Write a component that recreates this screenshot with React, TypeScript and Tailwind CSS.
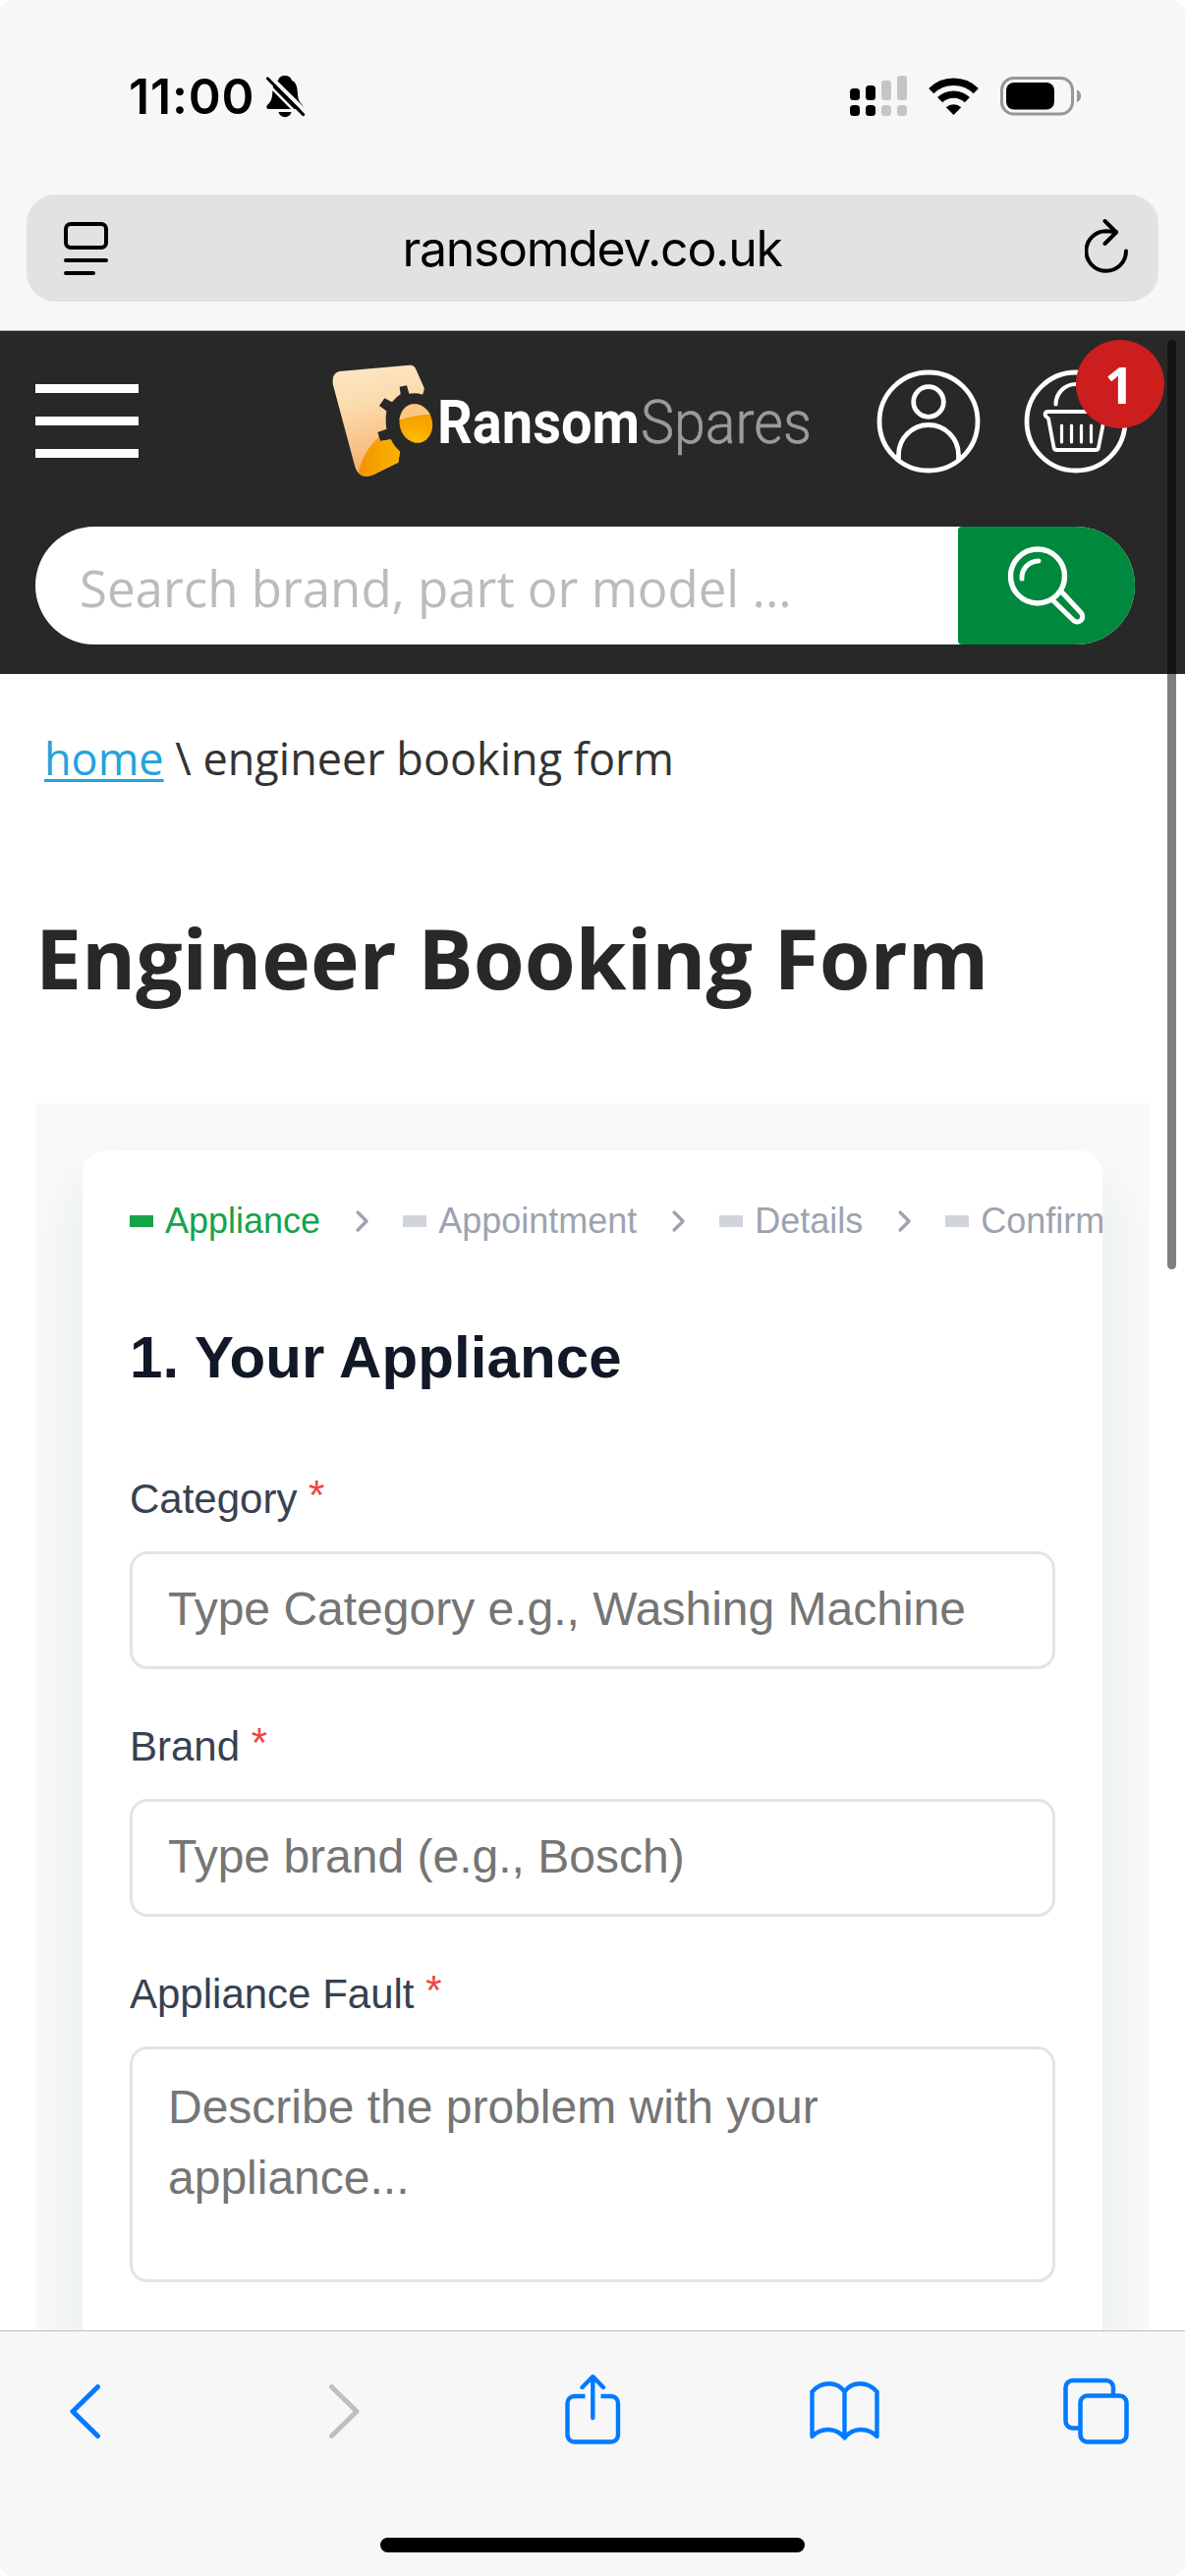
import React from "react";

const steps = [
  { label: "Appliance", active: true },
  { label: "Appointment", active: false },
  { label: "Details", active: false },
  { label: "Confirm", active: false },
];

function BellOff() {
  return (
    <svg width="40" height="44" viewBox="0 0 40 44" className="block">
      <path
        d="M19 1c-3.500 0-6.300 2-6.900 4.800C8 7.500 6.500 12 6.300 18c-.2 5-1 8.500-3.600 11.300C.8 31.300 0 32 .4 33.600.8 34.800 1.800 35 3 35h32c1.400 0 2.300-.5 2.500-1.700.3-1.400-.4-2.200-2.200-4.100C32.700 26.500 32 23 31.800 18c-.2-6-1.800-10.500-5.900-12.200C25.300 3 22.500 1 19 1Z"
        fill="#000"
      />
      <path d="M12.500 38h13c-.8 3.200-3.300 5.200-6.500 5.200s-5.700-2-6.500-5.200Z" fill="#000" />
      <path d="M3.500 1.500 41 38.500" stroke="#f7f7f7" strokeWidth="4" />
      <path d="M-1 7 35.500 44" stroke="#f7f7f7" strokeWidth="2.500" />
      <path d="M1.500 4 37.500 40.500" stroke="#000" strokeWidth="3.200" strokeLinecap="round" />
    </svg>
  );
}

function Signal() {
  return (
    <svg width="58" height="42" viewBox="0 0 58 42" className="block">
      <g fill="#000">
        <rect x="0" y="13" width="10" height="12" rx="3.500" />
        <rect x="16" y="10" width="10" height="15" rx="3.500" />
        <rect x="0" y="30" width="10" height="11" rx="3.500" />
        <rect x="16" y="30" width="10" height="11" rx="3.500" />
      </g>
      <g fill="#c5c5c5">
        <rect x="32" y="5" width="10" height="20" rx="3" />
        <rect x="48" y="0" width="10" height="25" rx="3" />
        <rect x="32" y="30" width="10" height="11" rx="3.500" />
        <rect x="48" y="30" width="10" height="11" rx="3.500" />
      </g>
    </svg>
  );
}

function Wifi() {
  return (
    <svg width="51" height="38" viewBox="0 0 51 38" className="block">
      <g fill="none" stroke="#000" strokeWidth="7.400">
        <path d="M2.700 13.600A32.500 32.500 0 0 1 48.300 13.600" />
        <path d="M11.600 22.700A20 20 0 0 1 39.400 22.700" />
      </g>
      <path d="M17.800 30.200a11.500 11.500 0 0 1 15.400 0L25.500 38Z" fill="#000" />
    </svg>
  );
}

function Battery() {
  return (
    <svg width="83" height="40" viewBox="0 0 83 40" className="block">
      <rect x="1.500" y="1.500" width="72" height="36.500" rx="12" fill="none" stroke="#989898" strokeWidth="3" />
      <rect x="6" y="6" width="49" height="27.500" rx="8" fill="#000" />
      <path d="M78 13.500c2.800 1 4.200 3.300 4.200 6.200s-1.400 5.200-4.200 6.200Z" fill="#989898" />
    </svg>
  );
}

function PageMenu() {
  return (
    <svg width="46" height="54" viewBox="0 0 46 54" fill="none" stroke="#000" strokeWidth="4" strokeLinecap="round" className="block">
      <rect x="2" y="2" width="41" height="24" rx="5" />
      <path d="M2 39h41M2 52h28" />
    </svg>
  );
}

function Reload() {
  return (
    <svg width="46" height="56" viewBox="0 0 46 56" fill="none" stroke="#000" strokeWidth="4" strokeLinecap="round" strokeLinejoin="round" className="block">
      <path d="M42 32.500A20.300 20.300 0 1 1 21.800 12.200L32 13" />
      <path d="M20.500 2 32 13.500 20.500 25" />
    </svg>
  );
}

function LogoMark() {
  return (
    <svg width="130" height="136" viewBox="0 0 390 408" className="block">
      <defs>
        <linearGradient id="pale" x1="0.3" y1="0" x2="0.5" y2="1">
          <stop offset="0" stopColor="#fde9cc" />
          <stop offset="0.350" stopColor="#fbdcae" />
          <stop offset="1" stopColor="#f6a55c" />
        </linearGradient>
        <linearGradient id="amber" x1="0" y1="0.5" x2="1" y2="0.5">
          <stop offset="0" stopColor="#f39200" />
          <stop offset="1" stopColor="#fdb900" />
        </linearGradient>
        <radialGradient id="hub" cx="0.5" cy="0.9" r="0.7">
          <stop offset="0" stopColor="#ffc000" />
          <stop offset="1" stopColor="#f49400" />
        </radialGradient>
        <clipPath id="body">
          <path d="M46 54 L258 35 Q272 33 279 46 L305 104 Q306 112 300 125 Q282 118 259 122 L252 97 L230 101 L233 124 Q220 131 207 148 L184 136 L168 159 L190 175 Q186 205 190 230 L163 240 L171 267 L203 262 Q212 282 231 299 L226 332 L150 370 Q106 386 94 346 L26 92 Q22 60 46 54Z" />
        </clipPath>
        <clipPath id="disc">
          <ellipse cx="280" cy="213" rx="50" ry="60" transform="rotate(-14 280 213)" />
        </clipPath>
      </defs>
      <g clipPath="url(#body)">
        <rect width="390" height="408" fill="url(#pale)" />
        <path d="M100 390 Q108 310 165 256 L260 230 V400 H100Z" fill="url(#amber)" />
      </g>
      <g clipPath="url(#disc)">
        <rect x="200" y="130" width="160" height="160" fill="url(#hub)" />
        <path d="M210 130H350V187Q280 180 210 210Z" fill="#fbc783" />
      </g>
    </svg>
  );
}

function Wordmark() {
  return (
    <svg width="392" height="76" viewBox="0 0 392 76" className="block overflow-visible">
      <text x="0" y="51" textLength="206" lengthAdjust="spacingAndGlyphs" fill="#fff" className="font-['Roboto'] text-[62px] font-bold">
        Ransom
      </text>
      <text x="207" y="51" textLength="174" lengthAdjust="spacingAndGlyphs" fill="#9b9b9b" stroke="#9b9b9b" strokeWidth="0.600" className="font-['Roboto'] text-[62px] font-light">
        Spares
      </text>
    </svg>
  );
}

function UserIcon() {
  return (
    <svg width="106" height="106" viewBox="0 0 106 106" fill="none" stroke="#fff" strokeWidth="4.800" className="block">
      <circle cx="53" cy="53" r="50" />
      <circle cx="53" cy="33" r="15.300" />
      <path d="M22.500 91V87a30.500 30.500 0 0 1 61 0V91" />
    </svg>
  );
}

function BasketIcon() {
  return (
    <svg width="106" height="106" viewBox="0 0 106 106" fill="none" stroke="#fff" strokeLinecap="round" strokeLinejoin="round" className="block">
      <circle cx="53" cy="53" r="50" strokeWidth="4.800" />
      <path d="M32.500 35.500a20.500 20.500 0 0 1 41 0" strokeWidth="4.200" />
      <path d="M24 49c-4-2.500-2.500-6 .5-6h57c3 0 4.500 3.500.5 6L76 79.500c-.4 1.800-1 2.500-3 2.500H33.500c-2 0-2.600-.7-3-2.500L25 50" strokeWidth="3.800" />
      <path d="M38.500 57v17M48.500 57v17M58.500 57v17M68.500 57v17" strokeWidth="3.200" />
    </svg>
  );
}

function Magnifier() {
  return (
    <svg width="80" height="80" viewBox="0 0 80 80" fill="none" stroke="#fff" strokeLinecap="round" strokeLinejoin="round" className="block">
      <circle cx="30" cy="30.500" r="27.500" strokeWidth="5.400" />
      <path d="M14 33a17 17 0 0 1 17-18" strokeWidth="5" />
      <path d="M46 55.500 66.500 75.500c5.500 4.500 12-2 8-7.500L54.500 46.500" strokeWidth="5" />
    </svg>
  );
}

function Required({ children }: { children: string }) {
  return (
    <label className="block text-[42px] leading-[60px] text-[#374151]">
      {children} <span className="relative -top-[4px] text-[#ef4444]">*</span>
    </label>
  );
}

function Field({ label, placeholder, className }: { label: string; placeholder: string; className: string }) {
  return (
    <div className={className}>
      <Required>{label}</Required>
      <div className="mt-[23px] flex h-[120px] items-center rounded-[18px] border-[3px] border-[#e4e4e4] px-9 pb-[3px] text-[48px] whitespace-nowrap text-[#757575]">
        {placeholder}
      </div>
    </div>
  );
}

export default function App() {
  return (
    <div className="relative flex h-[2622px] w-[1206px] flex-col overflow-hidden rounded-[14px] bg-white font-['Liberation_Sans',sans-serif]">
      <div className="h-[337px] shrink-0 border-b border-[#a9abab] bg-[#f7f7f7] font-['Inter',sans-serif] text-black">
        <div className="flex h-[198px] items-start pl-[131px]">
          <div className="mt-[68px] w-[140px] text-[50px] leading-[60px] font-semibold tracking-[0.8px]">11:00</div>
          <div className="mt-[76px]"><BellOff /></div>
          <div className="mt-[77px] ml-[554px]"><Signal /></div>
          <div className="mt-[79px] ml-[22px]"><Wifi /></div>
          <div className="mt-[78px] ml-[22px]"><Battery /></div>
        </div>
        <div className="mx-[27px] flex h-[109px] items-center justify-between rounded-[30px] bg-[#e2e2e2] pr-[29px] pl-[38px]">
          <PageMenu />
          <div className="mr-[10px] text-[50px] leading-[60px] tracking-[-1.300px]">ransomdev.co.uk</div>
          <div className="-mt-1"><Reload /></div>
        </div>
      </div>

      <header className="h-[349px] shrink-0 bg-[#282828]">
        <div className="flex h-[199px] items-start">
          <div className="mt-[54px] ml-9 flex w-[105px] flex-col gap-6">
            <div className="h-[9px] bg-white" />
            <div className="h-[9px] bg-white" />
            <div className="h-[9px] bg-white" />
          </div>
          <div className="mt-[23px] ml-[189px] w-[115px]"><LogoMark /></div>
          <div className="mt-[63px] w-[384px]"><Wordmark /></div>
          <div className="mt-[39px] ml-[63px]"><UserIcon /></div>
          <div className="relative mt-[39px] ml-[44px]">
            <BasketIcon />
            <div className="absolute -top-[30px] left-[53px] flex size-[90px] items-center justify-center rounded-full bg-[#cc1e1e] pr-[2px] font-['Open_Sans'] text-[52px] font-bold text-white">
              1
            </div>
          </div>
        </div>
        <div className="mx-9 flex h-[120px] w-[1119px] overflow-hidden rounded-full bg-white">
          <div className="flex flex-1 items-center pt-[3px] pl-[45px] font-['Open_Sans'] text-[51px] leading-[60px] text-[#bbb]">
            Search brand, part or model ...
          </div>
          <div className="flex w-[180px] items-center rounded-l-[4px] bg-[#00893e] pl-[51px]"><Magnifier /></div>
        </div>
      </header>

      <main className="h-[1686px] shrink-0 overflow-hidden bg-white">
        <nav className="mt-[56px] ml-[45px] font-['Open_Sans'] text-[45px] leading-[60px] text-[#333]">
          <span className="text-[#26a2dc] underline decoration-[3px] underline-offset-[4px]">home</span> \ engineer booking form
        </nav>
        <h1 className="mt-[123px] ml-9 font-['Open_Sans'] text-[84px] leading-[100px] font-bold tracking-[-0.050px] text-[#282828]">Engineer Booking Form</h1>

        <div className="mt-[98px] ml-9 h-[1300px] w-[1134px] overflow-hidden bg-[#f8faf9] px-12 pt-12">
          <section className="h-[1500px] w-[1038px] rounded-[24px] bg-white px-12 pt-12 shadow-[0_36px_60px_rgba(30,41,90,0.085)]">
            <div className="-mr-12 flex h-12 items-center overflow-hidden text-[36px] whitespace-nowrap">
              {steps.map((s, i) => (
                <React.Fragment key={s.label}>
                  {i > 0 && (
                    <svg width="36" height="36" viewBox="0 0 24 24" fill="none" stroke="#9ca3af" strokeWidth="2.200" strokeLinecap="round" strokeLinejoin="round" className="mx-6 shrink-0">
                      <path d="m9.400 18 6-6-6-6" />
                    </svg>
                  )}
                  <span className={s.active ? "mr-3 h-3 w-6 shrink-0 bg-[#16a34a]" : "mr-3 h-3 w-6 shrink-0 bg-[#d1d5db]"} />
                  <span className={s.active ? "text-[#16a34a]" : "text-[#9ca3af]"}>{s.label}</span>
                </React.Fragment>
              ))}
            </div>
            <h2 className="mt-[79px] text-[60px] leading-[72px] font-bold tracking-[0.100px] text-[#111827]">1. Your Appliance</h2>
            <Field className="mt-[78px]" label="Category" placeholder="Type Category e.g., Washing Machine" />
            <Field className="mt-[49px]" label="Brand" placeholder="Type brand (e.g., Bosch)" />
            <div className="mt-[49px]">
              <Required>Appliance Fault</Required>
              <div className="mt-[23px] h-[240px] rounded-[18px] border-[3px] border-[#e4e4e4] px-9 pt-[23px] text-[48px] leading-[72px] text-[#757575]">
                Describe the problem with your appliance...
              </div>
            </div>
          </section>
        </div>
      </main>

      <footer className="h-[250px] shrink-0 border-t border-[#bfbfbf] bg-[#f7f7f7]">
        <div className="flex h-[210px] items-start text-[#007aff]">
          <svg width="34" height="56" viewBox="0 0 34 56" fill="none" stroke="#007aff" strokeWidth="5" strokeLinecap="round" strokeLinejoin="round" className="mt-[53px] ml-[70px]">
            <path d="M29.500 3.500 4 28.500 29.500 53.500" />
          </svg>
          <svg width="34" height="56" viewBox="0 0 34 56" fill="none" stroke="#bfbfbf" strokeWidth="5" strokeLinecap="round" strokeLinejoin="round" className="mt-[53px] ml-[230px]">
            <path d="M3.500 3.500 29 28.500 3.500 53.500" />
          </svg>
          <svg width="58" height="74" viewBox="0 0 58 74" fill="none" stroke="#007aff" strokeWidth="4.400" strokeLinecap="round" strokeLinejoin="round" className="mt-[43px] ml-[206px]">
            <path strokeLinecap="butt" d="M21.500 23H10.500a7 7 0 0 0-7 7V62.500a7 7 0 0 0 7 7H48a7 7 0 0 0 7-7V30a7 7 0 0 0-7-7H37.500" />
            <path d="M29.300 45V4M18.500 14 29.300 3 40 14" />
          </svg>
          <svg width="72" height="62" viewBox="0 0 72 62" fill="none" stroke="#007aff" strokeWidth="4.400" strokeLinecap="round" strokeLinejoin="round" className="mt-[49px] ml-[191px]">
            <path d="M36.500 12.500C29 1.500 13 1.500 3.500 12.500V58C13 48.500 28 48.500 36.500 59.500 45 48.500 60 48.500 69.500 58V12.500C60 1.500 44 1.500 36.500 12.500V58" />
          </svg>
          <svg width="68" height="68" viewBox="0 0 68 68" fill="none" stroke="#007aff" strokeWidth="4.500" className="mt-[47px] ml-[186px]">
            <path d="M18 51.500H10.500a7 7 0 0 1-7-7V10a7 7 0 0 1 7-7H45a7 7 0 0 1 7 7V17.500" />
            <rect x="18.500" y="18.500" width="47" height="47" rx="7" />
          </svg>
        </div>
        <div className="mx-auto h-[15px] w-[432px] rounded-full bg-black" />
      </footer>

      <div className="absolute top-[346px] left-[1188px] h-[946px] w-[9px] rounded-full bg-black/50" />
    </div>
  );
}
